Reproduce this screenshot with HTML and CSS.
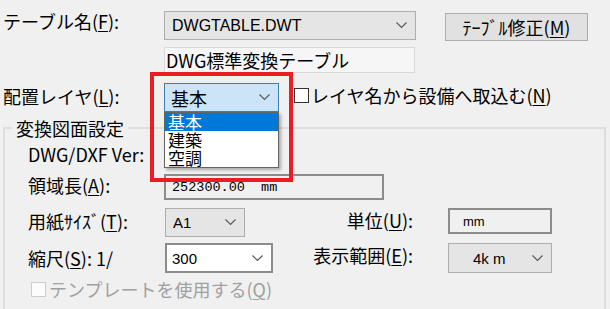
FILE: index.html
```html
<!DOCTYPE html>
<html lang="ja">
<head>
    <meta charset="UTF-8">
    <title>変換設定</title>
    <link rel="stylesheet" href="styles.css">
</head>
<body>
<div class="dialog">
    <!-- table row -->
    <div class="row row-table">
        <div class="lbl top-lbl">テーブル名(<u>F</u>):</div>
        <div class="combo combo-table">
            <span class="latin">DWGTABLE.DWT</span>
            <svg class="chev" width="11" height="7" viewBox="0 0 11 7"><polyline points="0.5,0.5 5.5,5.5 10.5,0.5"/></svg>
        </div>
        <button class="btn">ﾃｰﾌﾞﾙ修正(<u>M</u>)</button>
    </div>

    <div class="row row-desc">
        <div class="readonly">DWG標準変換テーブル</div>
    </div>

    <!-- layer row -->
    <div class="row row-layer">
        <div class="lbl top-lbl lbl-layer">配置レイヤ(<u>L</u>):</div>
        <div class="layer-wrap">
            <div class="combo combo-focus">
                <span>基本</span>
                <svg class="chev" width="11" height="7" viewBox="0 0 11 7"><polyline points="0.5,0.5 5.5,5.5 10.5,0.5"/></svg>
            </div>
            <ul class="droplist">
                <li class="sel">基本</li>
                <li>建築</li>
                <li>空調</li>
            </ul>
        </div>
        <div class="check">
            <span class="box"></span>
            <span class="lbl">レイヤ名から設備へ取込む(<u>N</u>)</span>
        </div>
    </div>

    <!-- conversion group -->
    <fieldset class="group">
        <legend>変換図面設定</legend>
        <div class="group-body">
            <div class="row row-ver">
                <div class="lbl in-lbl">DWG/DXF Ver:</div>
            </div>
            <div class="row row-len">
                <div class="lbl in-lbl lbl-len">領域長(<u>A</u>):</div>
                <div class="edit edit-len"><span class="mono">252300.00&nbsp; mm</span></div>
            </div>
            <div class="grid">
                <div class="lbl lbl-paper">用紙ｻｲｽﾞ(<u>T</u>):</div>
                <div class="combo combo-paper">
                    <span class="latin small">A1</span>
                    <svg class="chev" width="11" height="7" viewBox="0 0 11 7"><polyline points="0.5,0.5 5.5,5.5 10.5,0.5"/></svg>
                </div>
                <div class="lbl right-lbl">単位(<u>U</u>):</div>
                <div class="edit edit-unit"><span class="latin tiny">mm</span></div>

                <div class="lbl lbl-scale">縮尺(<u>S</u>): 1/</div>
                <div class="combo combo-scale">
                    <span class="latin small">300</span>
                    <svg class="chev" width="11" height="7" viewBox="0 0 11 7"><polyline points="0.5,0.5 5.5,5.5 10.5,0.5"/></svg>
                </div>
                <div class="lbl right-lbl">表示範囲(<u>E</u>):</div>
                <div class="combo combo-range">
                    <span class="latin small">4k m</span>
                    <svg class="chev" width="11" height="7" viewBox="0 0 11 7"><polyline points="0.5,0.5 5.5,5.5 10.5,0.5"/></svg>
                </div>
            </div>
            <div class="check check-off">
                <span class="box"></span>
                <span class="lbl">テンプレートを使用する(<u>Q</u>)</span>
            </div>
        </div>
    </fieldset>

    <!-- red marker over the layer dropdown -->
    <div class="highlight"></div>
</div>
</body>
</html>
```

FILE: styles.css
```css
body {
    margin: 0;
    background-color: #f0f0f0;
    font-family: "Noto Sans CJK JP", sans-serif;
    font-size: 18px;
    color: #000;
}
.dialog {
    position: relative;
    width: 610px;
    height: 309px;
    overflow: hidden;
}
.row {
    display: flex;
    align-items: flex-start;
}
.lbl {
    line-height: 20px;
    white-space: nowrap;
}
u {
    text-decoration-thickness: 1px;
    text-underline-offset: 2px;
}
.latin {
    font-family: "Liberation Sans", Arial, sans-serif;
    font-size: 16px;
}
.small {
    font-size: 15px;
}
.tiny {
    font-size: 13px;
}
.mono {
    font-family: "Liberation Mono", monospace;
    font-size: 13.5px;
}

/* top rows */
.row-table {
    margin-top: 11px;
    height: 29px;
}
.top-lbl {
    width: 161px;
    margin-left: 3px;
}
.lbl-layer {
    margin-top: 3px;
}
.combo {
    box-sizing: border-box;
    display: flex;
    align-items: center;
    justify-content: space-between;
    background-color: #e5e5e5;
    border: 1px solid #adadad;
    padding: 0 8px 0 7px;
}
.chev polyline {
    fill: none;
    stroke: #5a5a5a;
    stroke-width: 1.2;
}
.combo-table {
    width: 252px;
    height: 29px;
}
.btn {
    box-sizing: border-box;
    margin: 2px 0 0 29px;
    width: 143px;
    height: 28px;
    padding: 0;
    background-color: #e1e1e1;
    border: 1px solid #adadad;
    font-family: inherit;
    font-size: 18px;
    line-height: 20px;
    color: #000;
}
.row-desc {
    margin-top: 7px;
}
.readonly {
    box-sizing: border-box;
    margin-left: 164px;
    width: 251px;
    height: 26px;
    padding-left: 1px;
    background-color: #f6f6f6;
    border: 1px solid #d9d9d9;
    line-height: 24px;
}
.row-layer {
    margin-top: 10px;
    height: 29px;
}
.layer-wrap {
    position: relative;
}
.combo-focus {
    width: 115px;
    height: 29px;
    background-color: #cce4f7;
    border: 1px solid #3c7fb1;
    padding-left: 6px;
}
.droplist {
    position: absolute;
    top: 29px;
    left: 0;
    z-index: 2;
    box-sizing: border-box;
    width: 115px;
    margin: 0;
    padding: 0;
    list-style: none;
    background-color: #fff;
    border: 1px solid #646464;
    box-shadow: 2px 2px 3px rgba(0, 0, 0, 0.3);
}
.droplist li {
    height: 18px;
    line-height: 18px;
    font-size: 17px;
    padding-left: 3px;
}
.droplist .sel {
    background-color: #0078d7;
    color: #fff;
}
.check {
    display: flex;
    align-items: center;
    margin: 2px 0 0 15px;
}
.check .box {
    box-sizing: border-box;
    width: 15px;
    height: 15px;
    margin-right: 2px;
    background-color: #fff;
    border: 1px solid #333;
}

/* group box */
.group {
    box-sizing: border-box;
    width: 603px;
    margin: 5px 0 0 3px;
    padding: 0 0 30px 0;
    border: 2px solid #dedede;
    min-width: 0;
}
.group legend {
    margin-left: 7px;
    padding: 0 4px;
    line-height: 22px;
}
.group-body {
    padding-left: 23px;
}
.in-lbl {
    width: 136px;
}
.row-ver {
    margin-top: 2px;
    height: 28px;
}
.row-ver .lbl {
    margin-top: 3px;
}
.row-len {
    margin-top: 5px;
    height: 26px;
}
.lbl-len {
    margin-top: 1px;
}
.edit {
    box-sizing: border-box;
    display: flex;
    align-items: center;
    border: 2px solid #8c8c8c;
}
.edit-len {
    width: 220px;
    height: 26px;
    padding-left: 6px;
}
.grid {
    display: grid;
    grid-template-columns: 136px 108px 176px 104px;
    grid-template-rows: 29px 30px;
    row-gap: 6px;
    margin-top: 8px;
    align-items: start;
}
.lbl-paper {
    margin-top: 3px;
}
.lbl-scale {
    margin-top: 5px;
}
.right-lbl {
    text-align: right;
    padding-right: 35px;
    margin-top: 2px;
}
.combo-paper {
    width: 80px;
    height: 29px;
    margin-left: 1px;
}
.combo-scale {
    width: 108px;
    height: 30px;
    margin-left: 1px;
    background-color: #fff;
    border: 2px solid #8c8c8c;
    padding-left: 5px;
}
.edit-unit {
    width: 104px;
    height: 26px;
    padding-left: 13px;
}
.combo-range {
    width: 104px;
    height: 30px;
    padding-left: 24px;
}
.check-off {
    margin: 6px 0 0 3px;
    color: #a0a0a0;
}
.check-off .box {
    border-color: #cccccc;
    background-color: #fcfcfc;
    margin-right: 3px;
}

/* red annotation frame */
.highlight {
    position: absolute;
    left: 150px;
    top: 72px;
    width: 143px;
    height: 110px;
    box-sizing: border-box;
    border: 4.5px solid #ec1c24;
    z-index: 3;
}
```
